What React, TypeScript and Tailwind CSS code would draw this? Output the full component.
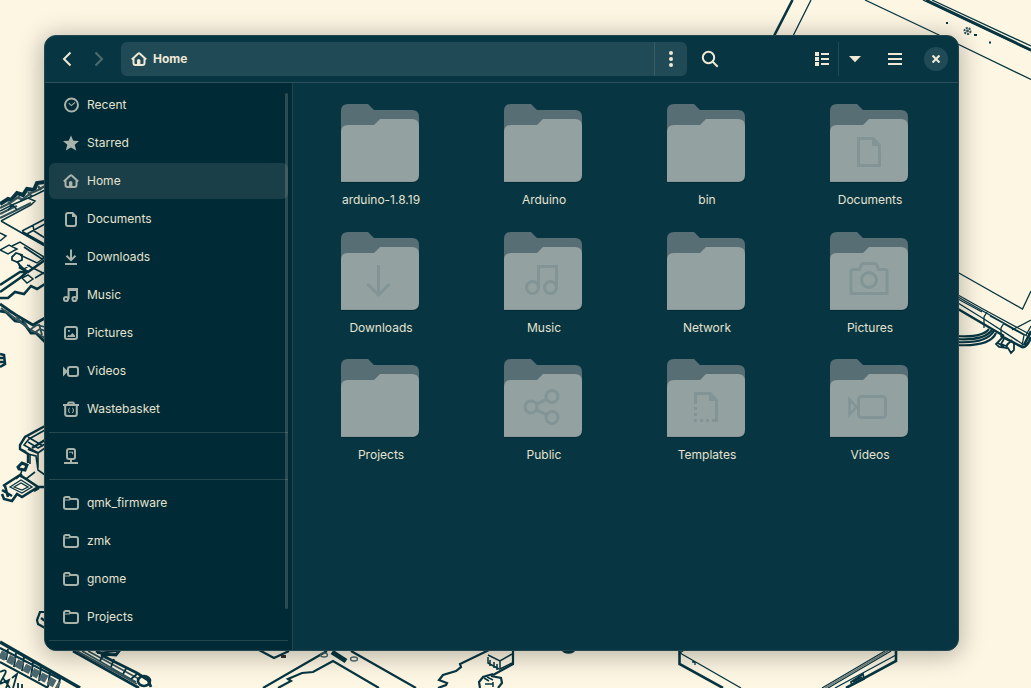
import type { ReactNode } from 'react';

type IconName = keyof typeof glyphs;

const glyphs = {
  recent: (
    <>
      <circle cx="8.5" cy="8" r="6.5" />
      <path d="M5.8 6.2 8.4 8.6 12 5.4" strokeWidth="1.1" />
    </>
  ),
  star: <path d="M8 .4 10.3 5.7 16 6.1 11.7 9.8 13.2 15.5 8 12.4 2.8 15.5 4.3 9.8 0 6.1 5.7 5.7Z" fill="currentColor" stroke="none" />,
  home: (
    <>
      <path d="M.8 8.4 7 2.7q1-.8 2 0l6.2 5.7M2.5 7.5V12q0 2 2 2h7q2 0 2-2V7.5" />
      <path d="M6 14V9.6Q6 8 7.7 8 9.4 8 9.4 9.6V14Z" fill="currentColor" stroke="none" />
    </>
  ),
  document: (
    <>
      <path d="M3 4q0-2 2-2h4.6L13 5.4V13q0 2-2 2H5q-2 0-2-2Z" />
      <path d="M9 1.5 13.5 6H9Z" fill="currentColor" stroke="none" />
    </>
  ),
  download: <path d="M8 .5V11M3.5 6.8 8 11.2l4.5-4.4M2 15h12" />,
  music: (
    <>
      <circle cx="3" cy="12" r="2.1" />
      <circle cx="11.5" cy="12" r="2.1" />
      <path d="M5.6 12V2H14V12" />
      <path d="M5 1h9v3H5Z" fill="currentColor" stroke="none" />
    </>
  ),
  picture: (
    <>
      <rect x="2" y="2" width="12" height="12" rx="2" />
      <path d="M4 12 5.5 9.8 7 10.5 9.4 8 12 10.5V12Z" fill="currentColor" stroke="none" />
      <path d="M5 5h1.8v1.8H5Z" fill="currentColor" stroke="none" />
    </>
  ),
  video: (
    <>
      <rect x="5" y="4" width="10" height="9" rx="2" />
      <path d="M0 3.5 5 8.5 0 13.500Z" fill="currentColor" stroke="none" />
    </>
  ),
  trash: (
    <>
      <path d="M0 4h16M5 3.5Q5 1.5 6.5 1.5h3Q11 1.5 11 3.5M2.2 4v9q0 2 2 2h7.6q2 0 2-2V4" />
      <path d="M6.8 7Q5.6 7.2 5.6 9q0 2.5 1.2 3M9.2 7q1.2.2 1.2 2 0 2.5-1.2 3" strokeWidth="1" />
    </>
  ),
  drive: (
    <>
      <rect x="4" y="1" width="8" height="10" rx="2" />
      <path d="M8 11v3.5M1 15h14" />
      <path d="M6 4.2h4M9.6 4v2.3" strokeWidth="1" />
    </>
  ),
  folder: (
    <>
      <path d="M1 4q0-2 2-2h3l1.5 2H13q2 0 2 2v6q0 2-2 2H3q-2 0-2-2Z" />
      <path d="M1 5h5.2l1.4-1" strokeWidth="1.2" />
    </>
  ),
};

function Icon({ name, className = '' }: { name: IconName; className?: string }) {
  return (
    <svg viewBox="0 0 16 16" className={`size-4 shrink-0 ${className}`} fill="none" stroke="currentColor" strokeWidth="2">
      {glyphs[name]}
    </svg>
  );
}

const places: { label: string; icon: IconName }[] = [
  { label: 'Recent', icon: 'recent' },
  { label: 'Starred', icon: 'star' },
  { label: 'Home', icon: 'home' },
  { label: 'Documents', icon: 'document' },
  { label: 'Downloads', icon: 'download' },
  { label: 'Music', icon: 'music' },
  { label: 'Pictures', icon: 'picture' },
  { label: 'Videos', icon: 'video' },
  { label: 'Wastebasket', icon: 'trash' },
];

const bookmarks = ['qmk_firmware', 'zmk', 'gnome', 'Projects'];

const emblems: Record<string, ReactNode> = {
  Documents: (
    <>
      <path d="M28.5 34.5H43L49.5 41V61.5H28.5Z" />
      <path d="M42 33 51 42H42Z" fill="#839496" stroke="none" />
    </>
  ),
  Downloads: <path d="M37.5 33V63M26.5 52 37.5 63 48.5 52" />,
  Music: (
    <>
      <circle cx="28.5" cy="55.5" r="6" />
      <circle cx="46.5" cy="55.5" r="6" />
      <path d="M34.5 55.5V34.5H52.5V55.5" />
    </>
  ),
  Pictures: (
    <>
      <path d="M21 61.5V39.5q0-2 2-2h6.5l1.5-4q.8-2 2.5-2h11q1.7 0 2.5 2l1.5 4H55q2 0 2 2V61.5Z" />
      <circle cx="39" cy="48" r="7.5" />
    </>
  ),
  Public: (
    <>
      <circle cx="27" cy="48" r="6" />
      <circle cx="48" cy="37.5" r="6" />
      <circle cx="48" cy="58.5" r="6" />
      <path d="M32.5 45.2 42.5 40.2M32.5 50.8 42.5 55.8" />
    </>
  ),
  Templates: (
    <>
      <path d="M28.5 45V34.5H43L49.5 41V61.5H45" />
      <path d="M42 33 51 42H42Z" fill="#839496" stroke="none" />
      <path d="M27 48h3v3h-3ZM27 54h3v3h-3ZM27 60h3v3h-3ZM33 60h3v3h-3ZM39 60h3v3h-3Z" fill="#839496" stroke="none" />
    </>
  ),
  Videos: (
    <>
      <rect x="28.5" y="37.5" width="27" height="21" rx="3" />
      <path d="M19.5 40.5V55.5L26.5 48Z" strokeWidth="2.5" />
    </>
  ),
};

const folders = [
  'arduino-1.8.19', 'Arduino', 'bin', 'Documents',
  'Downloads', 'Music', 'Network', 'Pictures',
  'Projects', 'Public', 'Templates', 'Videos',
];

function Folder({ name }: { name: string }) {
  return (
    <div className="flex w-[163px] flex-col items-center">
      <svg viewBox="0 0 79 80" className="h-20 w-[79px]">
        <path d="M0 79V77H78V72Q78 79 71 79Z" fill="#032b35" />
        <path d="M0 7Q0 0 7 0H27L33 6H71Q78 6 78 13V40H0Z" fill="#586e75" />
        <path d="M0 28Q0 21 7 21H33L39 15H71Q78 15 78 22V71Q78 78 71 78H0Z" fill="#93a1a1" />
        <path d="M0 77.5H71" stroke="#879797" />
        <g fill="none" stroke="#839496" strokeWidth="3">{emblems[name]}</g>
      </svg>
      <span className="mt-[7px] h-[18px] pl-px leading-[18px]">{name}</span>
    </div>
  );
}

function PlaceRow({ label, icon, active = false }: { label: string; icon: IconName; active?: boolean }) {
  return (
    <div className={`flex h-9 shrink-0 items-center gap-2 rounded-md pl-3.5 ${active ? 'bg-[#1a3f48]' : ''}`}>
      <Icon name={icon} className="text-[#aab3aa]" />
      <span>{label}</span>
    </div>
  );
}

function Divider() {
  return <div className="my-[3px] h-px shrink-0 bg-[#25474f]" />;
}

function Wallpaper() {
  return (
    <svg viewBox="0 0 1031 688" className="absolute inset-0 h-[688px] w-[1031px]" fill="none" stroke="#073642" strokeWidth="1.3">
      {/* tablet, top right */}
      <path d="M792.5 0 774 36M926 0 1031 50" strokeWidth="2.6" />
      <path d="M923 0 1031 51M932 0 1031 46M811 0 793 36M865 0 939 35 1031 79.5" />
      <g stroke="#2f5058">
        <circle cx="967.5" cy="31" r="3" strokeWidth="2" strokeDasharray="2 1" />
        <circle cx="967.5" cy="31" r=".8" />
      </g>
      <path d="M946 22h2v2h-2ZM974 34h3v2h-3ZM989 41.500h2v2h-2Z" fill="#073642" stroke="none" />
      <path d="M958 272.500 1022.500 309 1031 291M958 295 983 309 1031 335M958 299 982 312M958 303 984 319 1024 345" />
      <path d="M958 309 992 329 1004 336M1001 336 1022 347Q1027 348 1031 337M1031 331 1024 345" strokeWidth="2.600" />
      <path d="M987 312 984 317V328M1004 323 1001 328V337M1004 324 1024 335 1022 346M958 297 1027 336M990 316 1003 323M1012 330 1031 320M1026 335 1031 326" />
      <path d="M956 336Q982 338 989 329M956 339Q984 341 992 330M956 342Q986 344 994 331M956 345Q990 347 996 333" strokeWidth="2.200" />
      <path d="M1003 337 996 344 999 347 1008 348 1011 353 1014 350V342M1004 339 1001 344 1006 346 1012 340M998 343 1004 347M1008 343 1006 349" strokeWidth="1.800" />
      {/* circuit boards, left edge */}
      <path d="M0 204 8 199 11 200 17 193 23 195 27 189 34 190 37 183 45 182" strokeWidth="4" />
      <path d="M0 208 10 203 17 198 23 199 31 193 38 190 45 186M0 214 12 208 17 206M0 218 31 203M8 202 12 206M18 196 22 201M28 192 32 197M38 186 41 190" strokeWidth="2.200" stroke="#33545b" />
      <path d="M0 211 12 205 35 195 45 190M1 221 31 205 35 201 28 198M1 221 22 233 45 246M22 231 45 219M25 235 45 224M33 225 34 231 45 238M8 210 13 205 17 210M0 233 6 236 0 241M0 250 9 245 17 249 8 254ZM12 246 20 242 44 257M20 255 37 263 44 258M17 262 24 269 30 265M22 278 28 275 33 279 27 283ZM27 265 45 274M35 278 45 272" strokeWidth="1.500" />
      <path d="M12 257 16 253 22 255 22 260 17 262 12 260ZM18 262 20 267M24 247 42 259 45 257" strokeWidth="1.800" />
      <path d="M0 285 20 272 27 272 20 278 0 292M0 298 8 298 15 292 24 294 31 286 37 289 45 284M19 267 28 272 45 260M22 232 45 245" strokeWidth="2.600" />
      <path d="M0 304 10 311 16 315 33 325 38 322 45 318M0 311 6 312 15 321 23 322 31 333 36 333 45 342" strokeWidth="2.800" />
      <path d="M1 308 16 319 28 328 45 338M8 312 14 319M16 316 21 322M24 321 28 328M31 329 37 325 45 327M34 333 40 329 45 331M39 324 42 335" stroke="#33545b" strokeWidth="1.800" />
      <path d="M0 354 4 355 5 364 0 367M0 358h4M0 362h4" strokeWidth="2.600" />
      <path d="M45 426 25 437 20 445V449L28 454V463M28 449 38 453M20 449 26 452M45 440 32 448" strokeWidth="2.400" />
      <path d="M45 430 29 439 24 445 38 453 45 448M28 437 43 446M28 442 38 448 45 444M28 454 36 456 38 470 45 475M30 454V464M38 453V468M22 470 20 476 26 479 35 472M22 474 16 479" strokeWidth="1.600" />
      <path d="M18 467 22 463 27 465 25 470 19 469Z" strokeWidth="3" />
      <path d="M3 486 20 475 38 487 22 497 17 494 12 501 4 499 2 494M38 487 45 487M5 486 8 497M2 490 12 496M34 491 39 488" strokeWidth="2.600" />
      <path d="M10 487 21 480 32 487 22 493ZM14 487 21 483 28 487 22 490Z" />
      <path d="M45 612 40 612 37 620 38 624 45 628M41 618 45 621" strokeWidth="2.200" />
      {/* boards below the window */}
      <path d="M0 642 80 688" strokeWidth="3.400" />
      <path d="M0 648 60 679 58 688M0 662 48 688M8 649 6 660M16 653 14 667M24 657 22 671M33 662 31 677M41 667 39 681M50 672 48 687" strokeWidth="2" />
      <path d="M0 654 59 686" stroke="#4b666c" strokeWidth="8" strokeDasharray="7 2.200" />
      <path d="M0 672Q8 668 5 674L0 683M0 684 9 680 6 688M12 678 17 674 13 688M3 678 10 688M18 683V688M22 684V688" strokeWidth="1.800" />
      <path d="M73 651 139 688M96 651 103 654 116 655 120 650M101 655 137 673 148 680 151 687" strokeWidth="2.800" />
      <path d="M77 651 137 684M88 651 139 679M82 651 136 682" stroke="#33545b" strokeWidth="1.800" />
      <path d="M100 661 103 655M111 667 114 659M123 674 127 667M131 679 137 674M97 653 117 651M106 656 118 653" strokeWidth="1.800" />
      <ellipse cx="144" cy="681" rx="6" ry="5" strokeWidth="2.600" />
      <path d="M259 650 274 658 289 651M263 688 327 651M351 651 416 688M278 688 291 681 288 679 302 673 313 672 333 661 379 688" strokeWidth="2.200" />
      <path d="M332 652 346 661" strokeWidth="5" />
      <path d="M281 655h5v3h-5Z" fill="#352f33" stroke="none" />
      <g stroke="#4b666c">
        <ellipse cx="354" cy="659" rx="3.500" ry="2" />
        <ellipse cx="324" cy="655" rx="3.500" ry="2" />
      </g>
      <path d="M438 688 446 685 447 683 439 680 443 675 456 671 461 667 460 664 489 650M513 651V664L493 675" strokeWidth="2.200" />
      <path d="M493 674 483 677 479 682 480 688M491 676 501 678 502 683 498 688" strokeWidth="2.200" />
      <path d="M488 655 500 661 512 654M500 661V669L512 663M488 657V663L499 669M490 660V666M494 662V668M497 664V670M484 678 489 681M487 677 493 680M485 684h8M493 682V687" strokeWidth="1.500" />
      <ellipse cx="568.5" cy="650" rx="6" ry="3" fill="#073642" />
      <path d="M679.5 650V664L723 688M896 651V661L846 688" strokeWidth="2.600" />
      <path d="M680 653 741 688M680 653 684 650M692 662h3v3M822 688 885 651M828 688 891 651M835 688 896 655" />
      <path d="M825 688 888 651" stroke="#73807c" strokeWidth="2" />
      <path d="M851 682 863 674 864 679 852 685ZM853 682 862 677" strokeWidth="1.800" />
    </svg>
  );
}

export default function App() {
  return (
    <div className="relative h-[688px] w-[1031px] overflow-hidden bg-[#fdf6e3] px-11 pt-[35px] font-['Inter',sans-serif] text-[12px] text-[#e6e2d0]">
      <Wallpaper />
      <main className="relative flex h-[616px] w-[915px] flex-col overflow-hidden rounded-xl border border-[#24474f] bg-[#073642] shadow-[0_3px_24px_2px_rgba(0,0,0,0.28)]">
        <header className="flex h-[47px] shrink-0 items-center border-b border-[#2d515a] text-[#eee8d5]">
          <svg viewBox="0 0 60 16" className="ml-3.5 h-4 w-[60px]" fill="none" stroke="currentColor" strokeWidth="2">
            <path d="M11.500 1.500 5 8l6.500 6.500" />
            <path d="M36.500 1.500 43 8l-6.500 6.500" opacity=".3" />
          </svg>
          <div className="ml-0.5 flex h-[34px] w-[566px] items-center overflow-hidden rounded-md bg-[#204a56]">
            <div className="flex h-full w-[534px] items-center gap-1.5 border-r border-[#3a5d64] pl-2.5 font-bold">
              <Icon name="home" />
              <span>Home</span>
            </div>
            <svg viewBox="0 0 32 18" className="h-[18px] w-8" fill="currentColor">
              <circle cx="16" cy="3" r="2" /><circle cx="16" cy="9" r="2" /><circle cx="16" cy="15" r="2" />
            </svg>
          </div>
          <svg viewBox="0 0 18 18" className="ml-3.5 size-[18px]" fill="none" stroke="currentColor" strokeWidth="2">
            <circle cx="7.500" cy="7.500" r="5.700" /><path d="m11.500 11.500 5.200 5.200" />
          </svg>
          <svg viewBox="0 0 16 16" className="ml-[95px] size-4" fill="currentColor">
            <path d="M1 1h4v4H1ZM1 6h4v4H1ZM1 11h4v4H1ZM7 2h8v2H7ZM7 7h8v2H7ZM7 12h8v2H7Z" />
          </svg>
          <div className="ml-2 h-[34px] w-px bg-[#244b55]" />
          <svg viewBox="0 0 12 8" className="ml-2.5 h-2 w-3" fill="currentColor"><path d="M0 1h12L6 7.300Z" /></svg>
          <svg viewBox="0 0 16 16" className="ml-[26px] size-4" stroke="currentColor" strokeWidth="2">
            <path d="M1 3h14M1 8h14M1 13h14" />
          </svg>
          <div className="ml-[21px] flex size-6 items-center justify-center rounded-full bg-[#204a56]">
            <svg viewBox="0 0 8 8" className="size-2" stroke="currentColor" strokeWidth="2.200"><path d="m.5.5 7 7m0-7-7 7" /></svg>
          </div>
        </header>
        <div className="flex min-h-0 flex-1">
          <aside className="relative flex w-[248px] shrink-0 flex-col gap-0.5 border-r border-[#24474f] bg-[#002b36] pt-1 pr-1 pl-1">
            {places.map((p) => <PlaceRow key={p.label} {...p} active={p.label === 'Home'} />)}
            <Divider />
            <PlaceRow label="" icon="drive" />
            <Divider />
            {bookmarks.map((b) => <PlaceRow key={b} label={b} icon="folder" />)}
            <Divider />
            <div className="absolute top-[10px] right-1 h-[516px] w-[3px] rounded-full bg-[#eee8d5]/18" />
          </aside>
          <section className="grid grid-cols-[repeat(4,163px)] content-start gap-y-[22.5px] pt-[21px] pl-1.5">
            {folders.map((f) => <Folder key={f} name={f} />)}
          </section>
        </div>
      </main>
    </div>
  );
}
